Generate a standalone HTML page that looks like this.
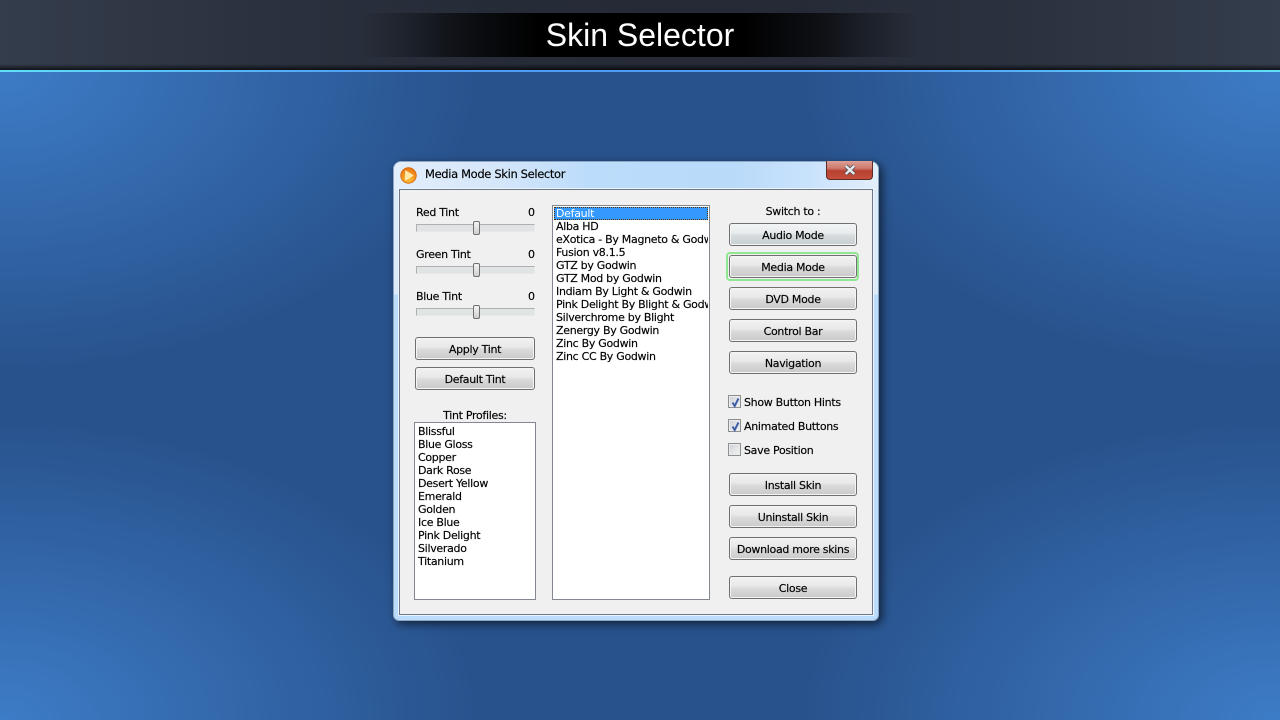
<!DOCTYPE html>
<html><head><meta charset="utf-8"><style>
html,body{margin:0;padding:0;width:1280px;height:720px;overflow:hidden}
body{position:relative;background:#28528c;font-family:"DejaVu Sans","Liberation Sans",sans-serif;font-size:11px;letter-spacing:-.3px;color:#000;-webkit-text-stroke:.15px #000}
div{position:absolute;box-sizing:border-box;white-space:nowrap}
.bg{left:0;top:72px;width:1280px;height:648px;background:
 radial-gradient(ellipse 480px 300px at 0 0,#3d7cc7 0%,rgba(61,124,199,0) 100%),
 radial-gradient(ellipse 480px 300px at 1280px 0,#3d7cc7 0%,rgba(61,124,199,0) 100%),
 radial-gradient(ellipse 480px 300px at 0 648px,#3d7cc7 0%,rgba(61,124,199,0) 100%),
 radial-gradient(ellipse 480px 300px at 1280px 648px,#3d7cc7 0%,rgba(61,124,199,0) 100%),
 #28528c}
.hdr{left:0;top:0;width:1280px;height:70px;background:linear-gradient(90deg,#343d4c 0%,#2b323f 20%,#252b37 38%,#252a36 62%,#2b323f 80%,#343d4c 100%)}
.hs{left:0;top:60px;width:1280px;height:10px;background:linear-gradient(180deg,rgba(0,0,0,0) 40%,rgba(0,0,0,.7))}
.strip{left:360px;top:13px;width:560px;height:44px;background:linear-gradient(90deg,rgba(0,0,0,0) 0%,rgba(0,0,0,.3) 10%,rgba(0,0,0,.6) 17%,#000 32%,#000 68%,rgba(0,0,0,.6) 83%,rgba(0,0,0,.3) 90%,rgba(0,0,0,0) 100%)}
.ttl{left:0;top:14px;width:1280px;text-align:center;font:32px/42px "Liberation Sans",sans-serif;letter-spacing:0;color:#fff;-webkit-text-stroke:0}
.line{left:0;top:70px;width:1280px;height:2px;background:linear-gradient(90deg,#62e0fa 0%,#4f9cf5 30%,#4f9cf5 70%,#62e0fa 100%)}
.win{left:393px;top:161px;width:486px;height:460px;border-radius:8px 8px 6px 6px;border:1px solid #8fa6c2;box-shadow:3px 3px 9px rgba(0,0,0,.6);
 background:linear-gradient(180deg,#dcebfa 0,#dcebfa 132px,#bcdcfd 133px,#bcdcfd 100%)}
.tg{left:0;top:0;width:484px;height:28px;border-radius:7px 7px 0 0;background:linear-gradient(90deg,#e2eefb 0%,#d4e6fa 22%,#bcdcfb 40%,#b9daf9 70%,#c8e2fc 85%,#e2eefb 100%)}
.cl{left:399px;top:189px;width:474px;height:426px;background:#f0f0f0;border:1px solid #6c7888;box-shadow:0 0 0 1px #eef5fc}
.t{line-height:13px}
.c{text-align:center}
.b{width:128px;height:23px;border:1px solid #707070;border-radius:3px;text-align:center;line-height:23px;background:linear-gradient(180deg,#f2f2f2 0%,#e9e9e9 42%,#dadada 55%,#cacaca 100%);box-shadow:inset 0 0 0 1px #f4f4f4}
.b.l{width:120px}
.list{background:#fff;border:1px solid #828790;overflow:hidden}
.i{position:absolute;left:3px;line-height:13px}
.tr{left:416px;width:119px;height:8px;background:#e0e4e4;border:1px solid;border-color:#b0b0b0 #e8e8e8 #e8e8e8 #b0b0b0}
.th{width:7px;height:14px;left:473px;border:1px solid #707070;border-radius:2px;background:linear-gradient(180deg,#f4f4f4,#cfcfcf)}
.cb{left:728px;width:13px;height:13px;border:1px solid #8e8f8f;background:linear-gradient(135deg,#cfd2d6,#f4f4f4);box-shadow:inset 0 0 0 1px #e8eaec}
.cb svg{position:absolute;left:1px;top:1px}
</style></head><body>
<div class="bg"></div>
<div class="hdr"></div><div class="hs"></div><div class="strip"></div>
<div class="ttl">Skin Selector</div>
<div class="line"></div>

<div class="win"><div class="tg"></div></div>
<svg style="position:absolute;left:400px;top:167px" width="17" height="17" viewBox="0 0 17 17">
<defs><radialGradient id="o" cx=".5" cy=".7" r=".7"><stop offset="0" stop-color="#ffc53a"/><stop offset="1" stop-color="#e8700e"/></radialGradient></defs>
<circle cx="8.5" cy="8.5" r="7.8" fill="url(#o)" stroke="#d8690e" stroke-width=".8"/>
<path d="M5.5 3.8L13 8.5L5.5 13.2Z" fill="#ffe9a8" stroke="#fff3d0" stroke-width=".6"/></svg>
<div class="t" style="left:425px;top:168px;font-size:11.5px;letter-spacing:-.35px">Media Mode Skin Selector</div>
<div style="left:826px;top:161px;width:47px;height:19px;border:1px solid #5c2b28;border-top:0;border-radius:0 0 4px 4px;background:linear-gradient(180deg,#dca096 0%,#cf7a6e 40%,#b8402f 55%,#c4503c 100%)"></div>
<svg style="position:absolute;left:843px;top:164px" width="14" height="12" viewBox="0 0 14 12"><path d="M2.8 2L11.2 10M11.2 2L2.8 10" stroke="#4a5058" stroke-width="4"/><path d="M2.8 2L11.2 10M11.2 2L2.8 10" stroke="#e6e8ea" stroke-width="2.5"/></svg>

<div class="cl"></div>

<div class="t" style="left:416px;top:206px">Red Tint</div><div class="t" style="left:528px;top:206px">0</div>
<div class="tr" style="top:224px"></div><div class="th" style="top:221px"></div>
<div class="t" style="left:416px;top:248px">Green Tint</div><div class="t" style="left:528px;top:248px">0</div>
<div class="tr" style="top:266px"></div><div class="th" style="top:263px"></div>
<div class="t" style="left:416px;top:290px">Blue Tint</div><div class="t" style="left:528px;top:290px">0</div>
<div class="tr" style="top:308px"></div><div class="th" style="top:305px"></div>

<div class="b l" style="left:415px;top:337px">Apply Tint</div>
<div class="b l" style="left:415px;top:367px">Default Tint</div>

<div class="t c" style="left:414px;top:409px;width:122px">Tint Profiles:</div>
<div class="list" style="left:414px;top:422px;width:122px;height:178px">
<div class="i" style="top:2px">Blissful</div>
<div class="i" style="top:15px">Blue Gloss</div>
<div class="i" style="top:28px">Copper</div>
<div class="i" style="top:41px">Dark Rose</div>
<div class="i" style="top:54px">Desert Yellow</div>
<div class="i" style="top:67px">Emerald</div>
<div class="i" style="top:80px">Golden</div>
<div class="i" style="top:93px">Ice Blue</div>
<div class="i" style="top:106px">Pink Delight</div>
<div class="i" style="top:119px">Silverado</div>
<div class="i" style="top:132px">Titanium</div>
</div>

<div class="list" style="left:552px;top:205px;width:158px;height:395px">
<div style="left:0;top:0;width:155px;height:392px;overflow:hidden">
<div style="left:1px;top:1px;width:154px;height:13px;background:#3399ff;border:1px dotted #5a3000"></div>
<div class="i" style="top:1px;color:#fff;-webkit-text-stroke:0">Default</div>
<div class="i" style="top:14px">Alba HD</div>
<div class="i" style="top:27px">eXotica - By Magneto &amp; Godwin</div>
<div class="i" style="top:40px">Fusion v8.1.5</div>
<div class="i" style="top:53px">GTZ by Godwin</div>
<div class="i" style="top:66px">GTZ Mod by Godwin</div>
<div class="i" style="top:79px">Indiam By Light &amp; Godwin</div>
<div class="i" style="top:92px">Pink Delight By Blight &amp; Godwin</div>
<div class="i" style="top:105px">Silverchrome by Blight</div>
<div class="i" style="top:118px">Zenergy By Godwin</div>
<div class="i" style="top:131px">Zinc By Godwin</div>
<div class="i" style="top:144px">Zinc CC By Godwin</div>
</div></div>

<div class="t c" style="left:729px;top:205px;width:128px">Switch to :</div>
<div class="b" style="left:729px;top:223px;background:linear-gradient(180deg,#f2f4f4 0%,#e8eced 42%,#d6dcde 55%,#c8cfd1 100%)">Audio Mode</div>
<div style="left:726px;top:252px;width:133px;height:29px;border:2px solid #8fe88f;border-radius:4px"></div>
<div class="b" style="left:729px;top:255px">Media Mode</div>
<div class="b" style="left:729px;top:287px">DVD Mode</div>
<div class="b" style="left:729px;top:319px">Control Bar</div>
<div class="b" style="left:729px;top:351px">Navigation</div>

<div class="cb" style="top:395px"><svg width="11" height="11" viewBox="0 0 11 11"><path d="M2.5 5.5L4.7 9L8.5 1.5" fill="none" stroke="#3d5fa8" stroke-width="2"/></svg></div>
<div class="t" style="left:744px;top:396px">Show Button Hints</div>
<div class="cb" style="top:419px"><svg width="11" height="11" viewBox="0 0 11 11"><path d="M2.5 5.5L4.7 9L8.5 1.5" fill="none" stroke="#3d5fa8" stroke-width="2"/></svg></div>
<div class="t" style="left:744px;top:420px">Animated Buttons</div>
<div class="cb" style="top:443px"></div>
<div class="t" style="left:744px;top:444px">Save Position</div>

<div class="b" style="left:729px;top:473px">Install Skin</div>
<div class="b" style="left:729px;top:505px">Uninstall Skin</div>
<div class="b" style="left:729px;top:537px">Download more skins</div>
<div class="b" style="left:729px;top:576px">Close</div>
</body></html>
